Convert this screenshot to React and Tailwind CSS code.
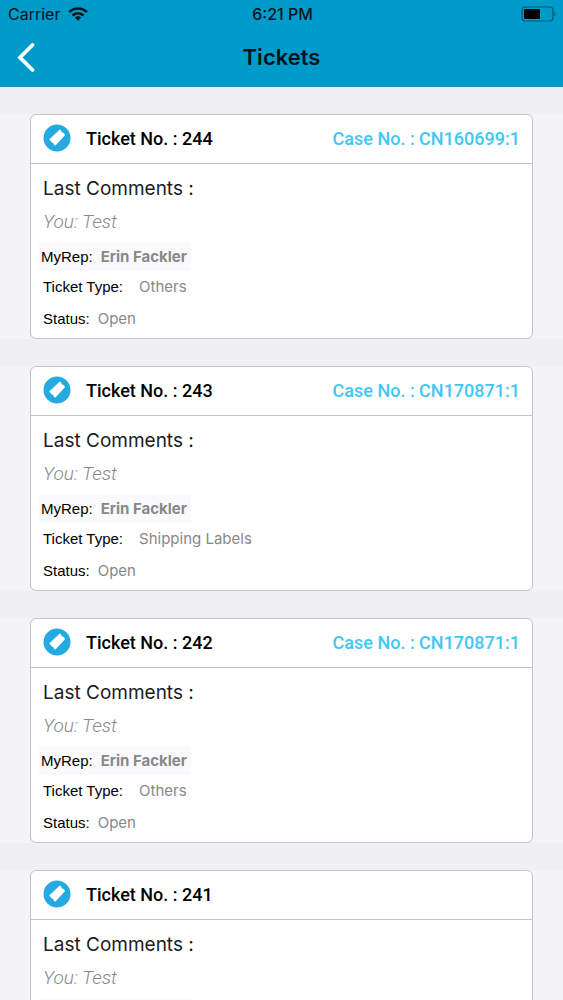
import React from "react";

const tickets = [
  { no: 244, caseNo: "CN160699:1", type: "Others", status: "Open" },
  { no: 243, caseNo: "CN170871:1", type: "Shipping Labels", status: "Open" },
  { no: 242, caseNo: "CN170871:1", type: "Others", status: "Open" },
  { no: 241, caseNo: "", type: "Others", status: "Open" },
];

const WifiIcon = () => (
  <svg viewBox="0 0 20 14" className="w-5 h-3.5" aria-hidden="true">
    <g fill="none" stroke="#04141a" strokeWidth="2.6">
      <path d="M1.2 5.2a12.4 12.4 0 0 1 17.6 0" />
      <path d="M4.5 8.5a7.8 7.8 0 0 1 11 0" />
    </g>
    <path d="M6.9 10.6a4.4 4.4 0 0 1 6.2 0L10 13.7z" fill="#04141a" />
  </svg>
);

const BatteryIcon = () => (
  <svg viewBox="0 0 36 16" className="w-9 h-4" aria-hidden="true">
    <rect x="1" y="1" width="31" height="14" rx="3" fill="none" stroke="#03566f" strokeWidth="1.2" />
    <rect x="3" y="3" width="16" height="10" rx="1" fill="#000" />
    <path d="M33.5 6v4c1.6-.6 1.6-3.4 0-4z" fill="#03566f" />
  </svg>
);

const TicketIcon = () => (
  <svg viewBox="0 0 28 28" className="w-7 h-7 shrink-0" aria-hidden="true">
    <circle cx="14" cy="14" r="13.5" fill="#24a9e0" />
    <path
      d="M16.8 5.6l1.4 1.2q.2 1.8 2 2l2 2.2L12.2 21.8l-1.4-1.4q-.2-1.8-2-2L6.2 15.6z"
      fill="#fff"
    />
  </svg>
);

const TicketCard = ({ ticket }) => {
  return (
    <li className="bg-[#f4f3f8] px-[30px]">
      <article className="h-[225px] bg-white border border-[#c4c4c7] rounded-md font-['Liberation_Sans',sans-serif]">
        <div className="h-[49px] flex items-center justify-between px-3 pb-[2px] border-b border-[#c4c4c7] text-[18px] font-medium font-['Roboto',sans-serif]">
          <div className="flex items-center gap-[15px]">
            <TicketIcon />
            <h2 className="text-black">Ticket No. : {ticket.no}</h2>
          </div>
          {ticket.caseNo && (
            <p className="text-[#3fc8f4]">Case No. : {ticket.caseNo}</p>
          )}
        </div>

        <div className="px-3">
          <h3 className="mt-[13px] text-[19px] leading-6 text-[#1c1c1e] font-['Inter',sans-serif]">
            Last Comments :
          </h3>
          <p className="mt-[9px] text-[19px] leading-6 italic font-light text-[#88888a] font-['Roboto',sans-serif]">
            You: Test
          </p>
          <p className="-ml-1 mt-[9px] w-[152px] h-7 flex items-center gap-2 pl-[2px] bg-[#faf9fb] text-[15px] whitespace-nowrap">
            <span className="text-black">MyRep:</span>
            <b className="text-[#88888a] font-bold font-['Inter',sans-serif]">Erin Fackler</b>
          </p>
          <p className="mt-1 h-6 flex items-center gap-4 text-[15px]">
            <span className="text-black">Ticket Type:</span>
            <span className="text-[#88888a] font-['Inter',sans-serif]">{ticket.type}</span>
          </p>
          <p className="mt-2 h-6 flex items-center gap-2 text-[15px]">
            <span className="text-black">Status:</span>
            <span className="text-[#88888a] font-['Inter',sans-serif]">{ticket.status}</span>
          </p>
        </div>
      </article>
    </li>
  );
};

const App = () => {
  return (
    <div className="h-screen flex flex-col overflow-hidden bg-[#efeff4] font-['Inter',sans-serif]">
      <header className="h-[87px] shrink-0 bg-[#009acb] border-b border-[#1a89ae]">
        {/* Status Bar */}
        <div className="h-7 grid grid-cols-3 items-center pl-2 pr-[6px] text-[16px] text-[#04141a]">
          <div className="flex items-center gap-2">
            <span>Carrier</span>
            <WifiIcon />
          </div>
          <span className="text-center font-medium">6:21 PM</span>
          <div className="flex justify-end">
            <BatteryIcon />
          </div>
        </div>

        {/* Navigation */}
        <div className="h-[58px] grid grid-cols-3 items-center px-4">
          <button type="button" aria-label="Back" className="w-5 h-8 cursor-pointer">
            <svg viewBox="0 0 20 32" className="w-5 h-8" aria-hidden="true">
              <path d="M16.5 4L4 16.5L16.5 29" fill="none" stroke="#fff" strokeWidth="3.8" strokeLinecap="round" />
            </svg>
          </button>
          <h1 className="text-center text-[22px] font-semibold text-[#04141a]">Tickets</h1>
        </div>
      </header>

      <main className="flex-1 min-h-0 overflow-y-auto [scrollbar-width:none]">
        <ul className="pt-[27px] flex flex-col gap-[27px]">
          {tickets.map((ticket) => (
            <TicketCard key={ticket.no} ticket={ticket} />
          ))}
        </ul>
      </main>
    </div>
  );
};

export default App;
